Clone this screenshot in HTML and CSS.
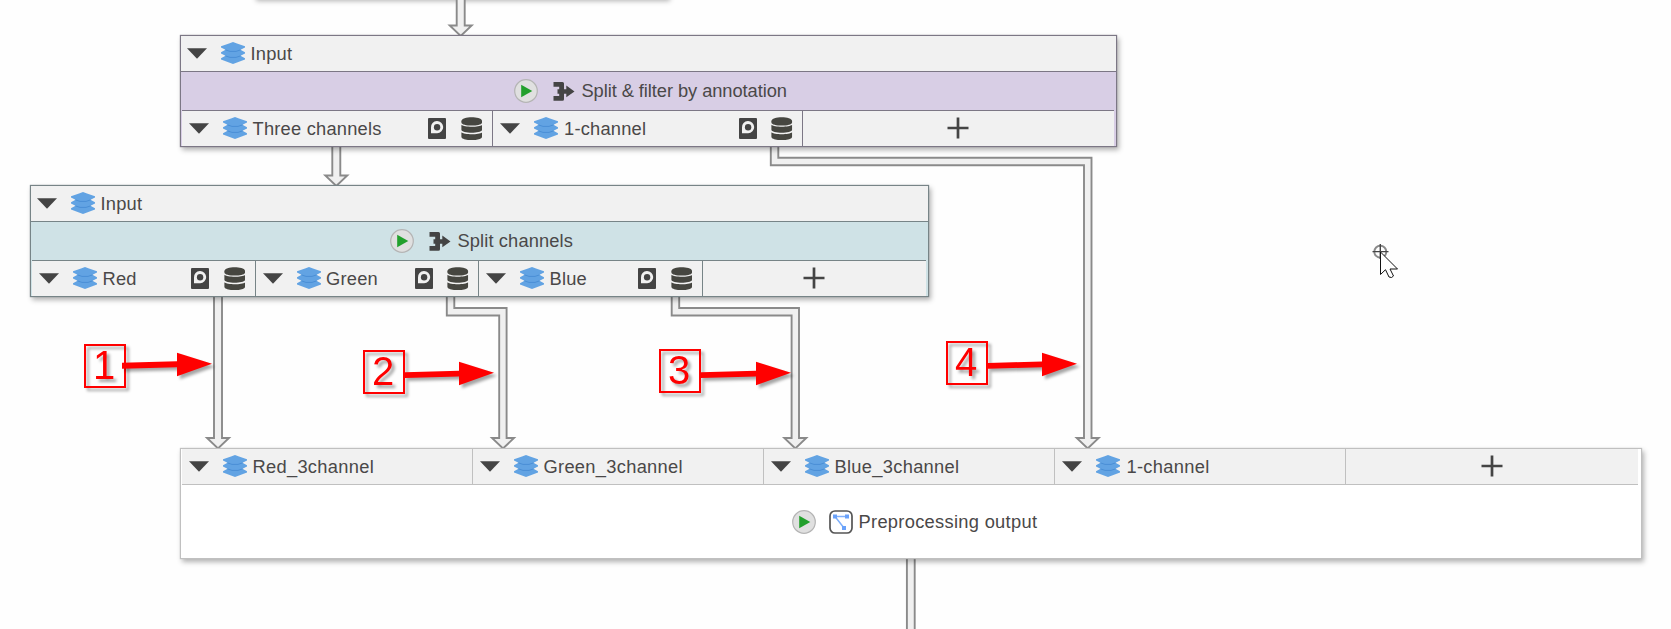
FILE: index.html
```html
<!DOCTYPE html>
<html lang="en">
<head>
<meta charset="utf-8">
<title>Pipeline</title>
<link rel="stylesheet" href="styles.css">
</head>
<body>
<svg class="defs" width="0" height="0" aria-hidden="true">
  <symbol id="tri" viewBox="0 0 20 11"><path d="M0 .3H20L10 10.7Z" fill="#444"/></symbol>
  <symbol id="stack" viewBox="0 0 24 22">
    <path d="M12 0L16 1.500 24 4.300V5.500L19.500 7.800 24 10.300V11.500L19.500 13.800 24 16.300V17.500L16 20.500 12 22 8 20.500 0 17.500V16.300L4.500 13.800 0 11.500V10.300L4.500 7.800 0 5.500V4.300L8 1.500Z" fill="#62a3e3"/>
    <path d="M4.500 7.900L9 9.400H15L19.500 7.900M4.500 13.900L9 15.400H15L19.500 13.900" fill="none" stroke="#4a8fd6" stroke-width="1"/>
  </symbol>
  <symbol id="marker" viewBox="0 0 18 21">
    <rect width="18" height="21" rx="1" fill="#444"/>
    <path d="M3 15.200V9.500A6.100 6.100 0 1 1 9.100 15.200Z" fill="#f1f1f1"/>
    <circle cx="9.100" cy="9.200" r="3.200" fill="#444"/>
  </symbol>
  <symbol id="db" viewBox="0 0 22 24">
    <path d="M.4 4.300C.4-1.100 21.600-1.100 21.600 4.300V5.500C21.600 9.700.4 9.700.4 5.500Z" fill="#464640"/>
    <path d="M.4 8C3 10.600 19 10.600 21.600 8V13C21.600 17 .4 17 .4 13Z" fill="#464640"/>
    <path d="M.4 15.700C3 18.300 19 18.300 21.600 15.700V20.200C21.600 24.900.4 24.900.4 20.200Z" fill="#464640"/>
  </symbol>
  <symbol id="plus" viewBox="0 0 22 22"><path d="M11 .5V21.500M.5 11H21.500" stroke="#444" stroke-width="2.700"/></symbol>
  <symbol id="play" viewBox="0 0 24 24">
    <circle cx="12" cy="12" r="11.300" fill="#e0e0e0" stroke="#b5b5b5" stroke-width="1.200"/>
    <path d="M7.200 5.800L18.300 12 7.200 18.200Z" fill="#22a02c"/>
  </symbol>
  <symbol id="split" viewBox="0 0 22 19">
    <path d="M.5 0H9.500Q11 0 11 1.500V7.200H13.300V3.500L21.500 9.400 13.300 15.300V11.700H11V17.200Q11 18.700 9.500 18.700H.5V14H6.200V11.700H4.500V7.200H6.200V4.700H.5Z" fill="#444"/>
  </symbol>
  <symbol id="graph" viewBox="0 0 24 24">
    <rect x="1" y="1" width="22" height="22" rx="5" fill="#fff" stroke="#555" stroke-width="1.700"/>
    <path d="M6 6.500H18M6 6.500L15 18" stroke="#7fb0fb" stroke-width="1.500"/>
    <path d="M4 4.500H8V8.500H4ZM16 4.500H20V8.500H16ZM13 16H17V20H13Z" fill="#6aa2fa"/>
  </symbol>
</svg>

<main class="canvas">
  <div class="node node-prev"></div>

  <svg class="edges" width="1671" height="629" viewBox="0 0 1671 629">
    <path d="M456.700-2V25.500H449.700L460.700 36 471.700 25.500H464.700V-2"/>
    <path d="M332.300 140V175.500H325.300L336.300 186 347.300 175.500H340.300V140"/>
    <path d="M214 290V438H207L218 448.500 229 438H222V290"/>
    <path d="M446.800 290V315.500H499.200V438H492L503 448.500 514 438H506.600V308H454.300V290"/>
    <path d="M671.700 290V315.500H791.600V438H784.300L795.300 448.500 806.300 438H799V308H679.200V290"/>
    <path d="M770.800 140V165.200H1084V438H1076.700L1087.700 448.500 1098.700 438H1091.500V157.800H778.300V140"/>
    <path d="M906.900 550V632H914.700V550"/>
  </svg>

  <section class="node node-filter">
    <header class="head"><svg class="tri"><use href="#tri"/></svg><svg class="stack"><use href="#stack"/></svg><span class="label">Input</span></header>
    <div class="band"><svg class="play"><use href="#play"/></svg><svg class="split"><use href="#split"/></svg><span class="label">Split &amp; filter by annotation</span></div>
    <div class="ports">
      <div class="port"><svg class="tri"><use href="#tri"/></svg><svg class="stack"><use href="#stack"/></svg><span class="label">Three channels</span><svg class="marker"><use href="#marker"/></svg><svg class="db"><use href="#db"/></svg></div>
      <div class="port"><svg class="tri"><use href="#tri"/></svg><svg class="stack"><use href="#stack"/></svg><span class="label single">1-channel</span><svg class="marker"><use href="#marker"/></svg><svg class="db"><use href="#db"/></svg></div>
      <div class="add"><svg class="plus"><use href="#plus"/></svg></div>
    </div>
  </section>

  <section class="node node-split">
    <header class="head"><svg class="tri"><use href="#tri"/></svg><svg class="stack"><use href="#stack"/></svg><span class="label">Input</span></header>
    <div class="band"><svg class="play"><use href="#play"/></svg><svg class="split"><use href="#split"/></svg><span class="label">Split channels</span></div>
    <div class="ports">
      <div class="port"><svg class="tri"><use href="#tri"/></svg><svg class="stack"><use href="#stack"/></svg><span class="label">Red</span><svg class="marker"><use href="#marker"/></svg><svg class="db"><use href="#db"/></svg></div>
      <div class="port"><svg class="tri"><use href="#tri"/></svg><svg class="stack"><use href="#stack"/></svg><span class="label">Green</span><svg class="marker"><use href="#marker"/></svg><svg class="db"><use href="#db"/></svg></div>
      <div class="port"><svg class="tri"><use href="#tri"/></svg><svg class="stack"><use href="#stack"/></svg><span class="label">Blue</span><svg class="marker"><use href="#marker"/></svg><svg class="db"><use href="#db"/></svg></div>
      <div class="add"><svg class="plus"><use href="#plus"/></svg></div>
    </div>
  </section>

  <section class="node node-output">
    <div class="ports">
      <div class="port"><svg class="tri"><use href="#tri"/></svg><svg class="stack"><use href="#stack"/></svg><span class="label">Red_3channel</span></div>
      <div class="port"><svg class="tri"><use href="#tri"/></svg><svg class="stack"><use href="#stack"/></svg><span class="label">Green_3channel</span></div>
      <div class="port"><svg class="tri"><use href="#tri"/></svg><svg class="stack"><use href="#stack"/></svg><span class="label">Blue_3channel</span></div>
      <div class="port"><svg class="tri"><use href="#tri"/></svg><svg class="stack"><use href="#stack"/></svg><span class="label single">1-channel</span></div>
      <div class="add"><svg class="plus"><use href="#plus"/></svg></div>
    </div>
    <div class="band"><svg class="play"><use href="#play"/></svg><svg class="graph"><use href="#graph"/></svg><span class="label">Preprocessing output</span></div>
  </section>

  <div class="note note-1">1</div>
  <div class="note note-2">2</div>
  <div class="note note-3">3</div>
  <div class="note note-4">4</div>

  <svg class="pointers" width="1671" height="629" viewBox="0 0 1671 629">
    <path d="M122 362.800L177 361.300V352.700L212 363.700 177 376.300V367.200L122 368.800Z"/>
    <path d="M405 372.200L459 370.700V361.800L494 372.800 459 385.300V376.500L405 378Z"/>
    <path d="M701 372.200L756 370.700V361.800L791 372.800 756 385.300V376.500L701 378Z"/>
    <path d="M988 363L1042 361.500V352.700L1077 363.700 1042 376.300V367.200L988 368.800Z"/>
  </svg>

  <svg class="cursor" width="32" height="40" viewBox="0 0 32 40">
    <circle cx="10.300" cy="11.700" r="6" fill="none" stroke="#8a8a8a" stroke-width="1.900"/>
    <path d="M2.500 11.600H18.500M10.300 4V19" stroke="#444" stroke-width="1.400"/>
    <path d="M10.500 12V34.500L15.500 29.700 19 37 21.500 37.500 23.500 36 20 29H27.500Z" fill="#fff" stroke="#111" stroke-width="1"/>
  </svg>
</main>
</body>
</html>
```
FILE: styles.css
```css
body {
  margin: 0;
  background: #fff;
  overflow: hidden;
  font-family: "Liberation Sans", Arial, sans-serif;
  font-size: 18.3px;
  color: #4a4848;
}

.defs { position: absolute; }

.canvas {
  position: relative;
  width: 1671px;
  height: 629px;
  overflow: hidden;
  background: #fefefe;
}

/* Diagram nodes */
.node {
  position: absolute;
  box-sizing: border-box;
  display: flex;
  flex-direction: column;
  border: 1px solid var(--line);
  background: var(--fill);
  box-shadow: 0 0 1px var(--line), 2px 3px 5px rgba(0, 0, 0, .3);
}

.node-prev { --line: #c4c4c4; --fill: #fff; left: 254px; top: -61px; width: 414px; height: 59px; }
.node-filter { --line: #7c7785; --fill: #d8cee5; left: 180px; top: 35px; width: 937px; height: 112px; }
.node-split { --line: #778487; --fill: #cfe2e6; left: 30px; top: 185px; width: 899px; height: 112px; }
.node-output { --line: #c0c0c0; --fill: #fff; left: 180px; top: 448px; width: 1462px; height: 111px; }

.head,
.port {
  display: flex;
  align-items: center;
  background: #f1f1f1;
}

.head {
  height: 35px;
  padding-left: 6px;
  border-bottom: 1px solid var(--line);
}

.band {
  flex: 1;
  display: flex;
  align-items: center;
}

.node-filter .band { padding-left: 333px; }
.node-split .band { padding-left: 359px; }
.node-output .band { padding-left: 610.500px; }

.ports {
  display: flex;
  height: 35px;
  margin: 0 2px 0 1px;
  background: #f1f1f1;
  border-top: 1px solid var(--line);
}

.node-output .ports {
  margin-right: 3px;
  border-top: 0;
  border-bottom: 1px solid var(--line);
}

.port {
  box-sizing: border-box;
  padding: 0 9.500px 0 7px;
  border-right: 1px solid var(--line);
}

.node-filter .port { width: 310.5px; }
.node-split .port { width: 223.5px; }
.node-output .port { width: 291px; }

.add {
  flex: 1;
  display: flex;
  align-items: center;
  justify-content: center;
}

.node-filter .add { padding-right: 2px; }

.label {
  padding-top: 1px;
  line-height: 24px;
  letter-spacing: .22px;
  white-space: nowrap;
}

.port .label { flex: 1; }
.label.single { padding-left: 1px; }
.node-filter .band .label { padding-top: 0; letter-spacing: -.07px; }
.node-split .band .label { padding-top: 0; letter-spacing: .12px; }
.node-output .label { padding-top: 0; letter-spacing: .3px; }

/* Icons */
svg { display: block; flex: none; }
.tri { width: 20px; height: 11px; margin-right: 14px; }
.stack { width: 24px; height: 22px; margin: 0 5.500px 1px 0; }
.marker { width: 18px; height: 21px; margin-right: 14.500px; }
.db { width: 21.500px; height: 23.500px; }
.plus { width: 22px; height: 22px; margin-bottom: 1px; }
.play { width: 24px; height: 24px; margin-right: 14.500px; }
.split { width: 22px; height: 19px; margin-right: 7px; }
.graph { width: 24px; height: 24px; margin: 0 5.500px 0 -1px; }

.edges,
.pointers {
  position: absolute;
  left: 0;
  top: 0;
}

.edges path {
  fill: #f0f0f0;
  stroke: #8a8a8a;
  stroke-width: 1.900;
}

/* Numbered callouts */
.note {
  position: absolute;
  box-sizing: border-box;
  width: 42px;
  height: 44px;
  padding-right: 2px;
  border: 2px solid #f00;
  color: #f00;
  font-size: 40px;
  line-height: 39px;
  text-align: center;
  filter: drop-shadow(3px 3px 1.500px rgba(0, 0, 0, .35));
}

.note-1 { left: 84px; top: 344px; }
.note-2 { left: 363px; top: 350px; }
.note-3 { left: 659px; top: 349px; }
.note-4 { left: 946px; top: 341px; }

.pointers path {
  fill: #f00;
  filter: drop-shadow(3px 3px 1.500px rgba(0, 0, 0, .35));
}

.cursor {
  position: absolute;
  left: 1370px;
  top: 240px;
}
```
